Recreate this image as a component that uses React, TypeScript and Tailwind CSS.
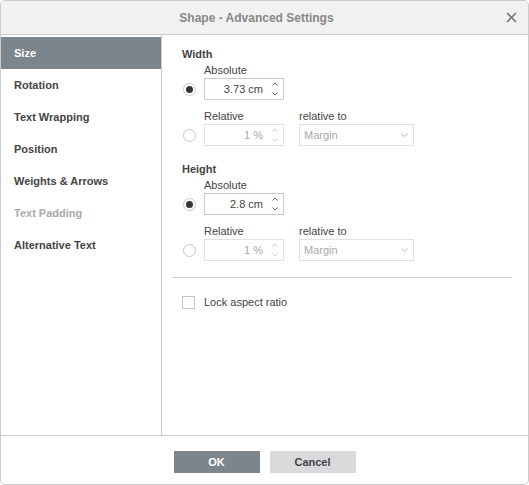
import React from "react";

const font = { fontFamily: '"Liberation Sans", Arial, sans-serif' };

export default function App() {
  const tabs = [
    { label: "Size", active: true },
    { label: "Rotation" },
    { label: "Text Wrapping" },
    { label: "Position" },
    { label: "Weights & Arrows" },
    { label: "Text Padding", disabled: true },
    { label: "Alternative Text" },
  ];

  return (
    <div
      className="w-[529px] h-[485px] bg-white text-[11px] text-[#444]"
      style={font}
    >
      <div className="flex h-[485px] w-[529px] flex-col overflow-hidden rounded-[5px] border border-[#cbcbcb] bg-white">
        {/* header */}
        <div className="relative flex h-[34px] shrink-0 items-center justify-center border-b border-[#cbcbcb] bg-[#f1f1f1] pr-[16px]">
          <span className="text-[12px] font-bold text-[#888]">
            Shape - Advanced Settings
          </span>
          <svg
            className="absolute right-[11px] top-[11px]"
            width="11"
            height="11"
            viewBox="0 0 11 11"
          >
            <path
              d="M1 1L10 10M10 1L1 10"
              stroke="#7a7a7a"
              strokeWidth="1.6"
            />
          </svg>
        </div>

        {/* body */}
        <div className="flex h-[400px] shrink-0">
          <div className="w-[161px] shrink-0 border-r border-[#cbcbcb] pt-[2px]">
            {tabs.map((t) => (
              <div
                key={t.label}
                className={`flex h-[32px] items-center pl-[13px] font-bold ${
                  t.active
                    ? "bg-[#7d858c] text-white"
                    : t.disabled
                    ? "text-[#a9a9a9]"
                    : "text-[#444]"
                }`}
              >
                {t.label}
              </div>
            ))}
          </div>

          <div className="flex-1 pl-[10px] pr-[16px] pt-[12px]">
            <div className="pl-[10px]">
              <SizeBlock title="Width" value="3.73 cm" />
              <div className="h-[16px]" />
              <SizeBlock title="Height" value="2.8 cm" />
            </div>
            <div className="mt-[16px] border-t border-[#cbcbcb]" />
            <div className="mt-[16px] flex items-center pl-[10px]">
              <span className="h-[13px] w-[13px] border border-[#c8c8c8] bg-white" />
              <span className="ml-[9px] text-[#444]">Lock aspect ratio</span>
            </div>
          </div>
        </div>

        {/* footer */}
        <div className="flex flex-1 justify-center gap-[10px] border-t border-[#cbcbcb] pt-[15px]">
          <button className="h-[22px] w-[86px] bg-[#7d858c] text-[11px] font-bold text-white">
            OK
          </button>
          <button className="h-[22px] w-[86px] bg-[#d8dadc] text-[11px] font-bold text-[#444]">
            Cancel
          </button>
        </div>
      </div>
    </div>
  );
}

function SizeBlock({ title, value }: { title: string; value: string }) {
  return (
    <div>
      <div className="h-[14px] leading-[14px] font-bold text-[#444]">{title}</div>
      <div className="mt-[2px] h-[14px] pl-[22px] leading-[14px]">Absolute</div>
      <div className="mt-[1px] flex items-center">
        <Radio checked />
        <Spinner value={value} />
      </div>
      <div className="mt-[9px] flex h-[14px] pl-[22px] leading-[14px] text-[#444]">
        <span className="w-[95px]">Relative</span>
        <span>relative to</span>
      </div>
      <div className="mt-[1px] flex items-center">
        <Radio />
        <Spinner value="1 %" disabled />
        <div className="ml-[15px] flex h-[22px] w-[115px] items-center justify-between border border-[#e1e1e1] pl-[4px] pr-[5px] text-[#a8a8a8]">
          <span>Margin</span>
          <svg width="7" height="4" viewBox="0 0 7 4">
            <path d="M0.5 0.5L3.5 3.5L6.5 0.5" fill="none" stroke="#b5b5b5" strokeWidth="0.9" />
          </svg>
        </div>
      </div>
    </div>
  );
}

function Radio({ checked }: { checked?: boolean }) {
  return (
    <span className="ml-[1px] mr-[8px] flex h-[13px] w-[13px] items-center justify-center rounded-full border border-[#c8c8c8] bg-white">
      {checked && <span className="h-[7px] w-[7px] rounded-full bg-[#333]" />}
    </span>
  );
}

function Spinner({ value, disabled }: { value: string; disabled?: boolean }) {
  const stroke = disabled ? "#c8c8c8" : "#555";
  return (
    <div
      className={`flex h-[22px] w-[80px] items-center justify-end border ${
        disabled ? "border-[#e1e1e1] text-[#a8a8a8]" : "border-[#cbcbcb] text-[#444]"
      }`}
    >
      <span className="mr-[9px]">{value}</span>
      <div className="mr-[5px] flex flex-col gap-[6px]">
        <svg width="6" height="4" viewBox="0 0 6 4">
          <path d="M0.5 3.5L3 1L5.5 3.5" fill="none" stroke={stroke} strokeWidth="0.9" />
        </svg>
        <svg width="6" height="4" viewBox="0 0 6 4">
          <path d="M0.5 0.5L3 3L5.5 0.5" fill="none" stroke={stroke} strokeWidth="0.9" />
        </svg>
      </div>
    </div>
  );
}
